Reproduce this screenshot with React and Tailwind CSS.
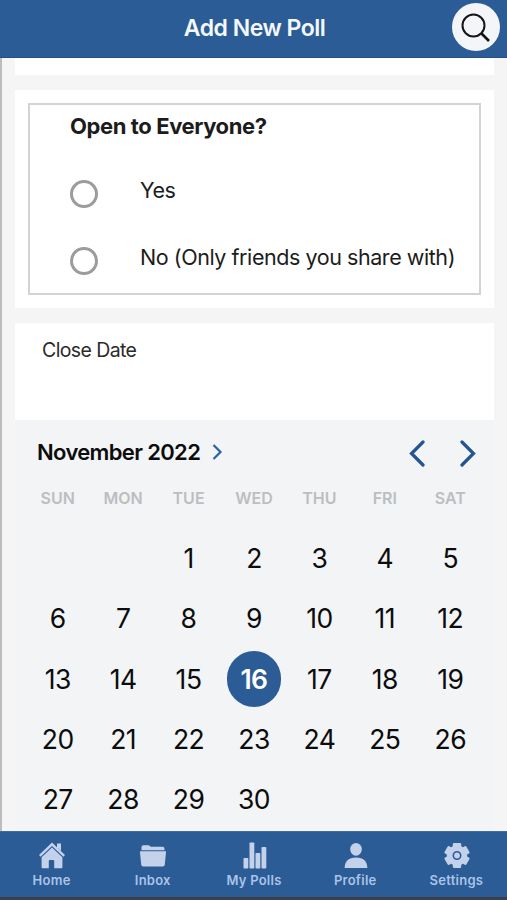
const WEEKDAYS = ["SUN", "MON", "TUE", "WED", "THU", "FRI", "SAT"];
const FIRST_WEEKDAY = 2;
const DAYS_IN_MONTH = 30;
const SELECTED_DAY = 16;

const OPTIONS = ["Yes", "No (Only friends you share with)"];

function HomeIcon() {
  return (
    <svg width="28" height="28" viewBox="0 0 28 28" fill="currentColor">
      <path d="M19 2.500h4v7.700L19 6.300z" />
      <path d="M14 1.600 1 14l1.600 1.700L14 4.900l11.400 10.800L27 14z" />
      <path d="M14 6.500 3.600 16.300v10q0 1 1 1h6.200v-7.400q0-1 1-1h3.400q1 0 1 1v7.400h7.200q1 0 1-1v-10z" />
    </svg>
  );
}

function InboxIcon() {
  return (
    <svg width="28" height="28" viewBox="0 0 28 28" fill="currentColor">
      <path d="M2.500 9.300V6q0-1.800 1.800-1.800h5.500l2 1.600h11.900q1.800 0 1.800 1.800v1.700z" />
      <path d="M.900 10.300h26.200l-1.300 13.200q-.2 1.900-2 1.900H4.200q-1.800 0-2-1.900z" />
    </svg>
  );
}

function PollsIcon() {
  return (
    <svg width="28" height="28" viewBox="0 0 28 28" fill="currentColor">
      <rect x="3.500" y="17" width="4.800" height="10.500" rx="0.800" />
      <rect x="9.500" y="1.500" width="4.800" height="26" rx="0.800" />
      <rect x="15.500" y="12" width="4.800" height="15.500" rx="0.800" />
      <rect x="21.500" y="6" width="4.800" height="21.500" rx="0.800" />
    </svg>
  );
}

function ProfileIcon() {
  return (
    <svg width="28" height="28" viewBox="0 0 28 28" fill="currentColor">
      <ellipse cx="15" cy="8.300" rx="5.800" ry="6.400" />
      <path d="M3.700 27q0-10.600 11.300-10.600T26.300 27z" />
    </svg>
  );
}

function SettingsIcon() {
  return (
    <svg width="28" height="28" viewBox="0 0 28 28">
      <g fill="currentColor">
        <circle cx="15" cy="14.500" r="10.200" />
        {[0, 60, 120].map((angle) => (
          <rect
            key={angle}
            x="10.800"
            y="1.900"
            width="8.400"
            height="25.200"
            rx="1.300"
            transform={`rotate(${angle} 15 14.5)`}
          />
        ))}
      </g>
      <circle cx="15" cy="14.500" r="3.700" fill="none" stroke="#2b5c95" strokeWidth="1.600" />
    </svg>
  );
}

const TABS = [
  { label: "Home", icon: HomeIcon },
  { label: "Inbox", icon: InboxIcon },
  { label: "My Polls", icon: PollsIcon },
  { label: "Profile", icon: ProfileIcon },
  { label: "Settings", icon: SettingsIcon },
];

function Header() {
  return (
    <header className="relative flex h-[58px] shrink-0 items-center justify-center border-b border-[#244f83] bg-[#2b5c95]">
      <h1 className="pl-0.5 text-[23px] font-semibold tracking-[-0.5px] text-[#f3f8ff]">Add New Poll</h1>
      <button
        aria-label="Search"
        className="absolute top-[3px] right-[7px] flex size-12 items-center justify-center rounded-full bg-[#f3f5f8] pt-px text-[#151515]"
      >
        <svg width="30" height="30" viewBox="0 0 30 30" fill="none" stroke="currentColor" strokeWidth="2">
          <circle cx="12.500" cy="12.500" r="11" />
          <path d="m20.500 20.500 7.500 7.500" strokeWidth="2.600" />
        </svg>
      </button>
    </header>
  );
}

function OpenToEveryone() {
  return (
    <section className="mt-[15px] h-[218px] bg-white px-[13px] pt-[13px]">
      <div className="h-[192px] border-2 border-[#d3d3d3] pl-10">
        <h2 className="pt-1.5 text-[22px] leading-[30px] font-bold tracking-[-0.4px] text-[#1c1c1c]">
          Open to Everyone?
        </h2>
        <div className="mt-[19px] flex flex-col">
          {OPTIONS.map((option) => (
            <label key={option} className="flex h-[67px] items-center">
              <span className="size-7 shrink-0 rounded-full border-3 border-[#9c9c9c]" />
              <span className="pb-1.5 pl-[42px] text-[21.5px] tracking-[-0.44px] whitespace-nowrap text-[#1c1c1c]">
                {option}
              </span>
            </label>
          ))}
        </div>
      </div>
    </section>
  );
}

function Calendar() {
  const cells = [
    ...Array.from({ length: FIRST_WEEKDAY }, () => null),
    ...Array.from({ length: DAYS_IN_MONTH }, (_, i) => i + 1),
  ];

  return (
    <section className="h-[411px] bg-[#f2f4f6] pr-[11px] pl-[10px]">
      <div className="flex h-[66px] items-center pl-3">
        <h2 className="pb-0.5 text-[22px] font-semibold tracking-[-0.65px] whitespace-nowrap text-[#0c0c0c]">
          November 2022
        </h2>
        <svg className="mb-[3px] ml-3" width="11" height="18" viewBox="0 0 11 18" fill="none" stroke="#2b62a5" strokeWidth="2.200">
          <path d="M1.500 2 8.500 9l-7 7" />
        </svg>
        <div className="mr-[7px] ml-auto flex gap-[35px] text-[#23558f]">
          <svg width="16" height="28" viewBox="0 0 16 28" fill="none" stroke="currentColor" strokeWidth="3.200" strokeLinecap="round">
            <path d="M14 3 2.500 14.500 14 26" />
          </svg>
          <svg width="16" height="28" viewBox="0 0 16 28" fill="none" stroke="currentColor" strokeWidth="3.200" strokeLinecap="round">
            <path d="m2 3 11.500 11.500L2 26" />
          </svg>
        </div>
      </div>
      <div className="grid h-[42px] grid-cols-7 text-center text-[16px] font-semibold text-[#bcbec0]">
        {WEEKDAYS.map((day) => (
          <span key={day}>{day}</span>
        ))}
      </div>
      <div className="grid auto-rows-[60.4px] grid-cols-7 place-items-center text-[26.5px] tracking-[-0.5px] text-[#0c0c0c]">
        {cells.map((day, i) =>
          day === SELECTED_DAY ? (
            <span
              key={i}
              className="flex h-14 w-[54px] items-center justify-center rounded-full bg-[#2b5c95] pt-px font-semibold text-white"
            >
              {day}
            </span>
          ) : (
            <span key={i} className="pt-px">
              {day}
            </span>
          )
        )}
      </div>
    </section>
  );
}

function TabBar() {
  return (
    <nav className="grid h-[69px] shrink-0 grid-cols-5 border-t border-b-3 border-t-[#416b9d] border-b-[#3b3f49] bg-[#2b5c95] pl-px text-[#c3d1eb]">
      {TABS.map(({ label, icon: Icon }) => (
        <a key={label} className="flex flex-col items-center pt-[9px]">
          <Icon />
          <span className="mt-px text-[13px] leading-5 font-semibold tracking-[0.25px] text-[#a9c4e8]">{label}</span>
        </a>
      ))}
    </nav>
  );
}

export default function App() {
  return (
    <div className="flex h-[900px] w-[507px] flex-col overflow-hidden bg-[#f5f5f5] font-['Inter',sans-serif]">
      <Header />
      <main className="flex-1 border-l-2 border-[#bdbdbd] pr-[13px] pl-[13px]">
        <div className="h-[17px] bg-white" />
        <OpenToEveryone />
        <section className="mt-[15px] h-[97px] bg-white pt-3 pl-[27px]">
          <p className="text-[19.5px] leading-[30px] tracking-[-0.6px] text-[#2a2a2a]">Close Date</p>
        </section>
        <Calendar />
      </main>
      <TabBar />
    </div>
  );
}
